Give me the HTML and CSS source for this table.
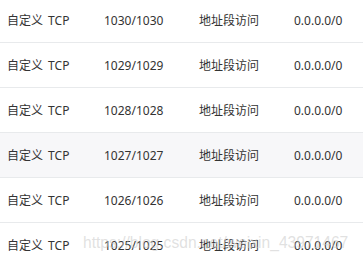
FILE: index.html
```html
<!DOCTYPE html>
<html lang="zh-CN">

<head>
    <meta charset="UTF-8">
    <meta name="viewport" content="width=device-width, initial-scale=1.0">
    <title>安全组规则</title>
    <link rel="stylesheet" href="styles.css">
</head>

<body>
    <div class="rule-table">
        <div class="rule-row">
            <span class="rule-type">自定义 TCP</span><span>1030/1030</span><span>地址段访问</span><span>0.0.0.0/0</span>
        </div>
        <div class="rule-row">
            <span class="rule-type">自定义 TCP</span><span>1029/1029</span><span>地址段访问</span><span>0.0.0.0/0</span>
        </div>
        <div class="rule-row">
            <span class="rule-type">自定义 TCP</span><span>1028/1028</span><span>地址段访问</span><span>0.0.0.0/0</span>
        </div>
        <div class="rule-row hover">
            <span class="rule-type">自定义 TCP</span><span>1027/1027</span><span>地址段访问</span><span>0.0.0.0/0</span>
        </div>
        <div class="rule-row">
            <span class="rule-type">自定义 TCP</span><span>1026/1026</span><span>地址段访问</span><span>0.0.0.0/0</span>
        </div>
        <div class="rule-row">
            <span class="rule-type">自定义 TCP</span><span>1025/1025</span><span>地址段访问</span><span>0.0.0.0/0</span>
        </div>
    </div>

    <div class="watermark">https://blog.csdn.net/weixin_43971467</div>
</body>

</html>
```

FILE: styles.css
```css
body {
    margin: 0;
    font-family: "Noto Sans", "Noto Sans CJK SC", sans-serif;
    font-size: 12px;
    color: #333;
    background-color: #fff;
    overflow: hidden;
    height: 261px;
    position: relative;
}

.rule-table {
    margin-top: -2px;
}

.rule-row {
    display: grid;
    grid-template-columns: 97px 95px 95px 1fr;
    align-items: center;
    height: 44px;
    padding-left: 7px;
    border-bottom: 1px solid #e8eaec;
    white-space: nowrap;
}

.rule-row.hover {
    background-color: #f7f7f9;
}

.rule-type {
    word-spacing: 2px;
}

.watermark {
    position: absolute;
    left: 83px;
    top: 234px;
    font-family: "Liberation Sans", Arial, sans-serif;
    font-size: 15.6px;
    color: rgba(200, 200, 200, 0.55);
    white-space: nowrap;
}
```
